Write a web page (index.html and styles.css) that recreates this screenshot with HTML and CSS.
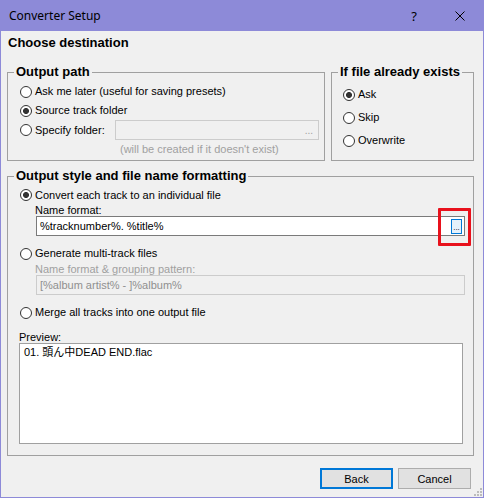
FILE: index.html
```html
<!DOCTYPE html>
<html lang="en">
<head>
<meta charset="utf-8">
<title>Converter Setup</title>
<link rel="stylesheet" href="styles.css">
</head>
<body>
<div class="window">
  <div class="titlebar">
    <span class="title">Converter Setup</span>
    <span class="tb-btn help">?</span>
    <span class="tb-btn close">
      <svg width="10" height="10" viewBox="0 0 10 10"><path d="M0.5 0.5L9.5 9.5M9.5 0.5L0.5 9.5" stroke="#000" stroke-width="1" fill="none"/></svg>
    </span>
  </div>
  <div class="content">
    <h1 class="heading">Choose destination</h1>
    <div class="top-row">
      <section class="group g-path">
        <div class="group-title">Output path</div>
        <label class="radio-row row-ask"><input type="radio" class="radio" name="path">Ask me later (useful for saving presets)</label>
        <label class="radio-row row-src"><input type="radio" class="radio" name="path" checked>Source track folder</label>
        <div class="radio-row row-spec">
          <label class="radio-row"><input type="radio" class="radio" name="path">Specify folder:</label>
          <div class="folder-edit">...</div>
        </div>
        <div class="hint">(will be created if it doesn't exist)</div>
      </section>
      <section class="group g-exists">
        <div class="group-title">If file already exists</div>
        <label class="radio-row first"><input type="radio" class="radio" name="exists" checked>Ask</label>
        <label class="radio-row"><input type="radio" class="radio" name="exists">Skip</label>
        <label class="radio-row"><input type="radio" class="radio" name="exists">Overwrite</label>
      </section>
    </div>
    <section class="group g-style">
      <div class="group-title">Output style and file name formatting</div>
      <label class="radio-row row-convert"><input type="radio" class="radio" name="style" checked>Convert each track to an individual file</label>
      <div class="field-label">Name format:</div>
      <div class="edit">
        <span class="edit-text">%tracknumber%. %title%</span>
        <span class="browse">...</span>
        <span class="annot"></span>
      </div>
      <label class="radio-row row-gap"><input type="radio" class="radio" name="style">Generate multi-track files</label>
      <div class="field-label disabled">Name format &amp; grouping pattern:</div>
      <div class="edit disabled">
        <span class="edit-text">[%album artist% - ]%album%</span>
      </div>
      <label class="radio-row row-gap"><input type="radio" class="radio" name="style">Merge all tracks into one output file</label>
      <div class="preview-label">Preview:</div>
      <div class="preview">01. 頭ん中DEAD END.flac</div>
    </section>
    <div class="buttons">
      <button class="btn default">Back</button>
      <button class="btn">Cancel</button>
    </div>
  </div>
  <svg class="grip" width="9" height="9" viewBox="0 0 9 9">
    <g fill="#bcbcbc">
      <rect x="7" y="1" width="2" height="2"/>
      <rect x="4" y="4" width="2" height="2"/>
      <rect x="7" y="4" width="2" height="2"/>
      <rect x="1" y="7" width="2" height="2"/>
      <rect x="4" y="7" width="2" height="2"/>
      <rect x="7" y="7" width="2" height="2"/>
    </g>
  </svg>
</div>
</body>
</html>
```

FILE: styles.css
```css
html, body {
  margin: 0;
  padding: 0;
  background: #f0f0f0;
}

body {
  font-family: "Liberation Sans", Arial, "Noto Sans CJK JP", sans-serif;
  font-size: 11px;
  color: #000;
}

.window {
  position: relative;
  width: 484px;
  height: 498px;
  box-sizing: border-box;
  border: 1px solid #8d8ad8;
  border-top: 0;
  background: #f0f0f0;
  display: flex;
  flex-direction: column;
}

.titlebar {
  flex: none;
  height: 31px;
  background: #8d8ad8;
  display: flex;
  align-items: center;
}

.title {
  flex: 1;
  padding-left: 8px;
  font-family: "Noto Sans", "Liberation Sans", sans-serif;
  font-size: 12px;
  line-height: 16px;
  color: #000;
}

.tb-btn {
  width: 46px;
  height: 31px;
  display: flex;
  align-items: center;
  justify-content: center;
}

.help {
  font-family: "Noto Sans", "Liberation Sans", sans-serif;
  font-size: 13px;
  line-height: 16px;
}

.content {
  flex: 1;
  padding: 0 9px 0 6px;
  display: flex;
  flex-direction: column;
}

.heading {
  margin: 4px 0 0 1px;
  height: 16px;
  font: bold 13px/16px "Liberation Sans", Arial, sans-serif;
}

.top-row {
  display: flex;
  gap: 6px;
  margin-top: 21px;
}

.group {
  box-sizing: border-box;
  border: 1px solid #a0a0a0;
  display: flex;
  flex-direction: column;
}

.group-title {
  align-self: flex-start;
  height: 16px;
  margin-top: -9px;
  padding: 0 2px;
  background: #f0f0f0;
  font: bold 13px/16px "Liberation Sans", Arial, sans-serif;
}

.g-path {
  width: 318px;
  height: 89px;
  padding-left: 12px;
}

.g-path .group-title {
  margin-left: -6px;
}

.g-exists {
  width: 143px;
  height: 89px;
  padding-left: 11px;
}

.g-exists .group-title,
.g-style .group-title {
  margin-left: -5px;
}

.radio-row {
  display: flex;
  align-items: center;
  line-height: 13px;
}

.radio {
  appearance: none;
  -webkit-appearance: none;
  flex: none;
  width: 12px;
  height: 12px;
  margin: 0 3px 0 0;
  box-sizing: border-box;
  border: 1px solid #333;
  border-radius: 50%;
  background: #fff;
}

.radio:checked {
  background: radial-gradient(circle, #333 0, #333 2.6px, #fff 3.4px);
}

.row-ask {
  margin-top: 2px;
  height: 19px;
}

.row-src {
  height: 19px;
}

.row-spec {
  height: 20px;
  padding-right: 5px;
}

.folder-edit {
  margin-left: auto;
  width: 204px;
  height: 20px;
  box-sizing: border-box;
  border: 1px solid #cccccc;
  display: flex;
  align-items: flex-end;
  justify-content: flex-end;
  padding: 0 5px 3px 0;
  color: #a0a0a0;
  font-size: 10px;
  line-height: 10px;
}

.hint {
  margin: 2px 0 0 100px;
  line-height: 14px;
  color: #a0a0a0;
}

.g-exists .radio-row {
  height: 23px;
}

.g-exists .first {
  margin-top: 3px;
}

.g-style {
  height: 280px;
  margin-top: 15px;
  padding: 0 8px 0 11px;
}

.g-style .radio {
  margin-left: 1px;
}

.row-convert {
  margin-top: 2px;
  height: 18px;
}

.row-gap {
  margin-top: 8px;
  height: 19px;
}

.field-label {
  margin-left: 16px;
  height: 12px;
  line-height: 12px;
}

.field-label.disabled {
  color: #a0a0a0;
}

.edit {
  position: relative;
  margin-left: 17px;
  height: 20px;
  box-sizing: border-box;
  border: 1px solid #7a7a7a;
  background: #fff;
  display: flex;
  align-items: center;
  padding: 0 2px 0 3px;
}

.edit.disabled {
  border-color: #cccccc;
  background: #f0f0f0;
  color: #8f8f8f;
}

.edit-text {
  flex: 1;
  line-height: 13px;
}

.browse {
  width: 11px;
  height: 15px;
  box-sizing: border-box;
  border: 1px solid #0078d7;
  background: #e5f1fb;
  display: flex;
  align-items: flex-end;
  justify-content: center;
  font-size: 8px;
  line-height: 8px;
  color: #000;
  padding-bottom: 1px;
}

.annot {
  position: absolute;
  left: 401px;
  top: -9px;
  width: 33px;
  height: 38px;
  box-sizing: border-box;
  border: 3px solid #e8111c;
  border-radius: 1px;
}

.preview-label {
  margin-top: 9px;
  height: 12px;
  line-height: 12px;
}

.preview {
  height: 101px;
  box-sizing: border-box;
  margin-right: 2px;
  border: 1px solid #a0a0a0;
  background: #fff;
  padding: 2px 4px;
  line-height: 13px;
  font-family: "Liberation Sans", "Noto Sans CJK JP", sans-serif;
}

.buttons {
  display: flex;
  justify-content: flex-end;
  gap: 5px;
  margin-top: 12px;
  padding-right: 3px;
}

.btn {
  width: 73px;
  height: 21px;
  box-sizing: border-box;
  border: 1px solid #adadad;
  background: #e1e1e1;
  padding: 0;
  font-family: "Liberation Sans", Arial, sans-serif;
  font-size: 11px;
  color: #000;
}

.btn.default {
  border: 2px solid #0078d7;
}

.grip {
  position: absolute;
  right: 1px;
  bottom: 1px;
}
```
